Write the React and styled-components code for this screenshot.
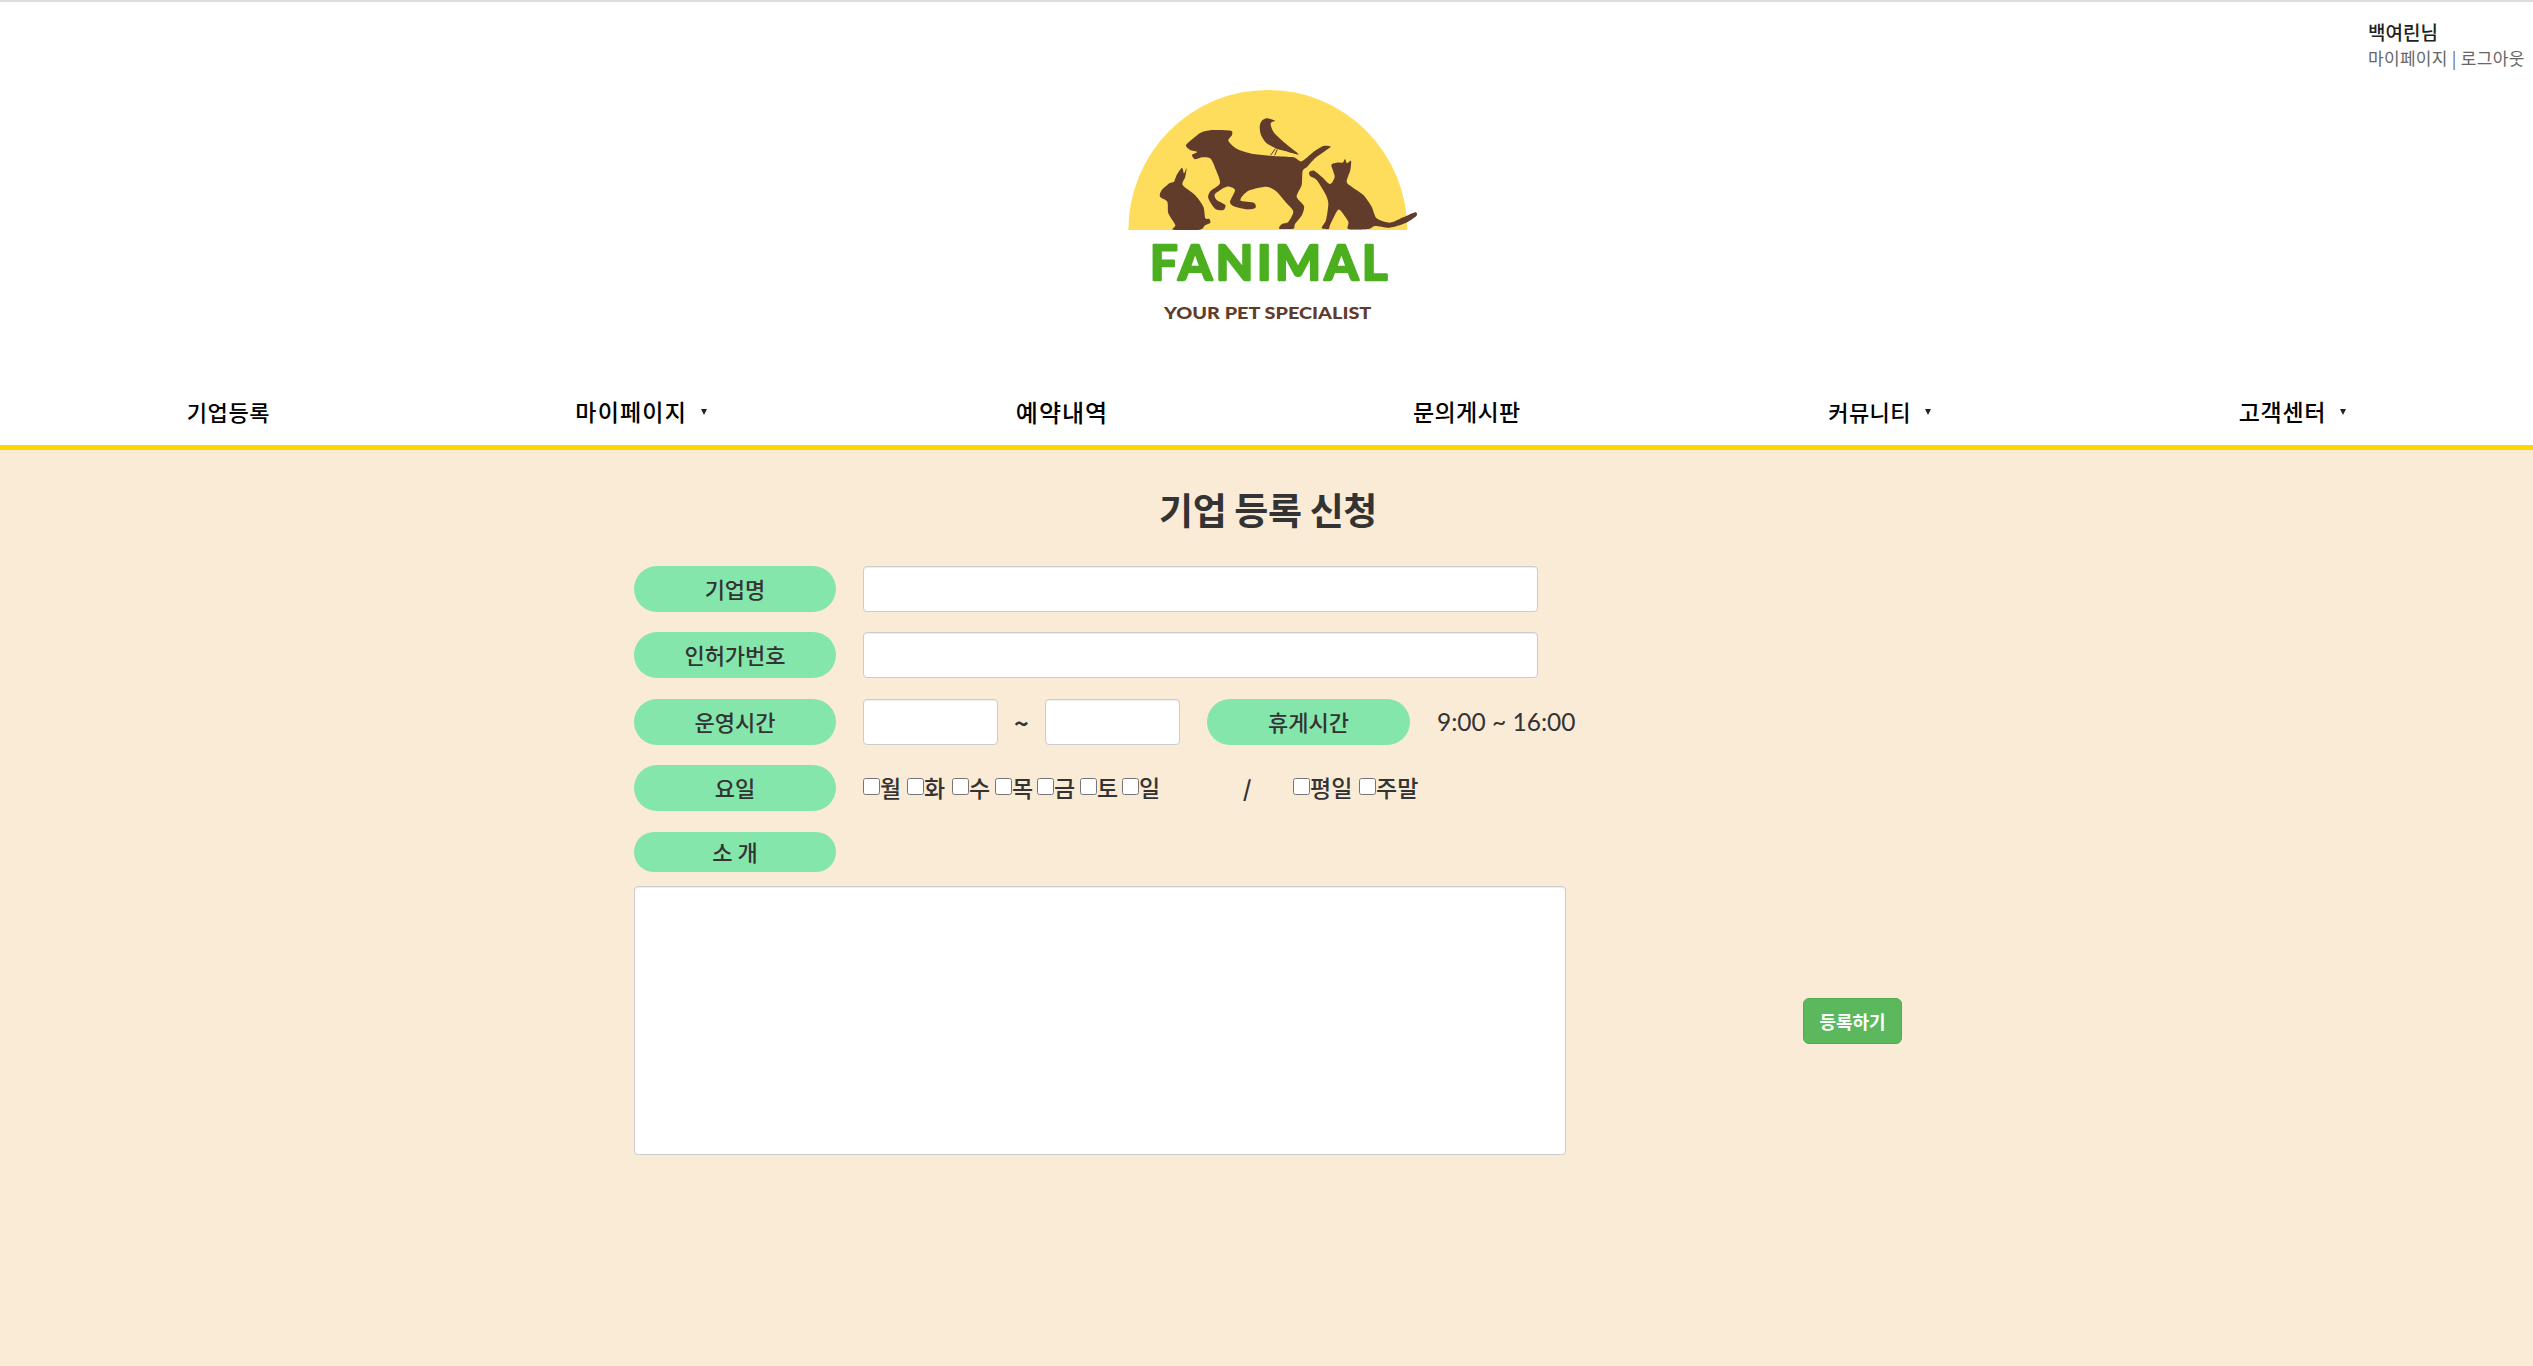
import React from "react";
import styled, { createGlobalStyle } from "styled-components";

const GlobalStyle = createGlobalStyle`
  html, body { margin: 0; padding: 0; background: #fff; }
  body { font-family: "Noto Sans CJK KR", "Noto Sans", sans-serif; color: #333; }
  * { box-sizing: border-box; }
`;

const Page = styled.div`
  display: flex;
  flex-direction: column;
  min-height: 1366px;
  border-top: 2px solid #ddd;
`;

const Header = styled.header`
  position: relative;
  display: flex;
  justify-content: center;
  height: 378px;
  padding: 68px 0 0 7px;
  background: #fff;
`;

const UserBox = styled.div`
  position: absolute;
  top: 16px;
  left: 2368px;
  white-space: nowrap;
`;

const UserName = styled.div`
  font-size: 19px;
  line-height: 27px;
  font-weight: 500;
  color: #222;
`;

const UserLinks = styled.div`
  font-size: 17px;
  line-height: 26px;
  color: #666;
  letter-spacing: 0.3px;
`;

const Nav = styled.nav`
  display: grid;
  grid-template-columns: repeat(6, 412.8px);
  height: 70px;
  padding: 0 0 0 22px;
  align-items: center;
  background: #fff;
  border-bottom: 5px solid #ffd700;
`;

const NavItem = styled.a`
  display: flex;
  align-items: center;
  justify-content: center;
  gap: 14px;
  padding-left: ${(p) => p.$shift || 0}px;
  font-size: ${(p) => p.$size}px;
  font-weight: 500;
  color: #000;
  margin-top: -3px;
  letter-spacing: ${(p) => p.$spacing || 0}px;
`;

const Caret = styled.span`
  width: 0;
  height: 0;
  margin-top: 2px;
  border-left: 3.5px solid transparent;
  border-right: 3.5px solid transparent;
  border-top: 6px solid #222;
`;

const Main = styled.main`
  flex: 1;
  background: #faebd7;
  padding: 0 0 0 634px;
`;

const Title = styled.h2`
  width: 2533px;
  margin: 0 0 0 -634px;
  height: 116px;
  padding: 31px 0 0 3px;
  font-size: 37px;
  line-height: 56px;
  font-weight: 700;
  letter-spacing: -0.4px;
  color: #333;
  text-align: center;
`;

const Row = styled.div`
  display: flex;
  align-items: center;
  height: ${(p) => p.$height || 46}px;
  margin-bottom: 20.4px;
`;

const Pill = styled.div`
  display: flex;
  align-items: center;
  justify-content: center;
  flex: none;
  width: ${(p) => p.$width || 202}px;
  height: 100%;
  margin-left: ${(p) => p.$before || 0}px;
  margin-right: 27px;
  padding-bottom: 2px;
  border-radius: 23px;
  background: #84e6ab;
  font-size: 22px;
  font-weight: 500;
  color: #333;
  white-space: pre;
`;

const TextInput = styled.input`
  width: ${(p) => p.$width}px;
  height: 46px;
  padding: 6px 12px;
  background: #fff;
  border: 1px solid #ccc;
  border-radius: 4px;
  box-shadow: inset 0 1px 1px rgba(0, 0, 0, 0.075);
`;

const Tilde = styled.span`
  width: 47px;
  text-align: center;
  font-size: 25px;
  font-weight: 700;
`;

const TimeText = styled.span`
  font-family: "Lato", sans-serif;
  font-size: 24.5px;
  color: #333;
  white-space: nowrap;
`;

const Check = styled.label`
  display: flex;
  align-items: center;
  width: ${(p) => p.$width}px;
  padding-bottom: 2px;
  font-size: 23px;
  font-weight: 500;
  line-height: 30px;
  color: #333;
  white-space: nowrap;

  input {
    width: 17px;
    height: 17px;
    margin: -1px 0 0 0;
  }
`;

const Slash = styled.span`
  width: 50px;
  margin-left: 78px;
  padding-bottom: 2px;
  font-size: 22px;
  font-weight: 700;
`;

const IntroRow = styled.div`
  display: flex;
  align-items: center;
  gap: 237px;
  margin-top: -6px;
`;

const IntroArea = styled.textarea`
  width: 932px;
  height: 269px;
  padding: 6px 12px;
  background: #fff;
  border: 1px solid #ccc;
  border-radius: 4px;
  box-shadow: inset 0 1px 1px rgba(0, 0, 0, 0.075);
  resize: none;
`;

const SubmitButton = styled.button`
  width: 99px;
  height: 46px;
  margin-top: 2px;
  padding: 0;
  border: 1px solid #4cae4c;
  border-radius: 6px;
  background: #5cb85c;
  font-family: inherit;
  font-size: 18px;
  font-weight: 700;
  color: #fff;
`;

// catmull-rom through the traced points, so thin legs and ears survive
const smooth = (pts) => {
  const n = pts.length;
  const at = (i) => pts[(i + n) % n];
  let d = `M${pts[0][0]} ${pts[0][1]}`;
  for (let i = 0; i < n; i++) {
    const [p0, p1, p2, p3] = [at(i - 1), at(i), at(i + 1), at(i + 2)];
    const c1 = [p1[0] + (p2[0] - p0[0]) / 8, p1[1] + (p2[1] - p0[1]) / 8];
    const c2 = [p2[0] - (p3[0] - p1[0]) / 8, p2[1] - (p3[1] - p1[1]) / 8];
    d += ` C${c1[0]} ${c1[1]} ${c2[0]} ${c2[1]} ${p2[0]} ${p2[1]}`;
  }
  return d + " Z";
};

const dog = [[318,226],[340,205],[362,188],[395,180],[452,182],[456,195],[445,212],[470,236],[520,252],[580,258],[640,262],[665,274],[700,246],[730,228],[752,230],[735,243],[705,265],[682,290],[668,302],[665,345],[650,380],[672,408],[666,435],[645,462],[640,476],[598,476],[606,462],[625,456],[640,425],[620,400],[590,365],[560,350],[510,360],[490,375],[482,392],[522,398],[526,414],[500,418],[460,408],[450,395],[465,360],[440,350],[405,372],[410,390],[436,405],[430,420],[405,416],[385,385],[390,365],[420,340],[408,300],[392,266],[368,262],[345,268],[336,255],[352,246],[330,240]];
const bird = [[560,145],[580,150],[585,153],[572,160],[580,185],[610,215],[656,253],[615,243],[592,237],[560,220],[543,195],[539,170],[545,153]];
const rabbit = [[306,293],[312,310],[320,293],[316,320],[308,345],[345,375],[370,410],[376,445],[388,447],[391,458],[375,466],[360,479],[280,479],[286,465],[265,430],[262,395],[240,380],[244,362],[268,340],[282,335],[290,315]];
const cat = [[688,306],[702,302],[725,320],[750,342],[764,320],[754,285],[770,278],[788,278],[795,267],[801,280],[813,272],[811,300],[800,335],[815,350],[850,375],[875,410],[890,445],[930,458],[970,442],[1006,427],[1009,438],[975,460],[930,473],[885,468],[865,477],[805,477],[805,455],[780,420],[770,425],[750,465],[746,477],[725,474],[738,450],[745,400],[735,370],[710,330],[690,318]];

const BROWN = "#613c2b";
const GREEN = "#4caf1f";

const Logo = () => (
  <svg width="380" height="270" viewBox="0 0 1140 810" aria-label="FANIMAL">
    <path d="M145 480 A418 420 0 0 1 982 480 Z" fill="#ffdd5c" />
    {[dog, bird, rabbit, cat].map((pts, i) => (
      <path key={i} d={smooth(pts)} fill={BROWN} />
    ))}
    <path d="M586 236 L572 256 M592 238 L584 256" stroke={BROWN} strokeWidth="3" />
    <text
      x="210"
      y="630"
      fontFamily="Lato, sans-serif"
      fontWeight="700"
      fontSize="146"
      textLength="712"
      lengthAdjust="spacing"
      fill={GREEN}
      stroke={GREEN}
      strokeWidth="8"
      strokeLinejoin="round"
    >
      FANIMAL
    </text>
    <text
      x="252"
      y="746"
      fontFamily="Lato, sans-serif"
      fontWeight="900"
      fontSize="52"
      textLength="622"
      lengthAdjust="spacingAndGlyphs"
      fill={BROWN}
    >
      YOUR PET SPECIALIST
    </text>
  </svg>
);

const navItems = [
  { label: "기업등록", size: 22, spacing: 0.6 },
  { label: "마이페이지", size: 23, spacing: 1.2, caret: true },
  { label: "예약내역", size: 24, spacing: 1, shift: 16 },
  { label: "문의게시판", size: 23, spacing: 0.4 },
  { label: "커뮤니티", size: 22, spacing: 0.4, caret: true },
  { label: "고객센터", size: 23, spacing: 0.6, caret: true },
];

const days = [
  ["월", 44],
  ["화", 45],
  ["수", 43],
  ["목", 42],
  ["금", 43],
  ["토", 42],
  ["일", 43],
];

export default function App() {
  return (
    <Page>
      <GlobalStyle />
      <Header>
        <Logo />
        <UserBox>
          <UserName>백여린님</UserName>
          <UserLinks>마이페이지 | 로그아웃</UserLinks>
        </UserBox>
      </Header>
      <Nav>
        {navItems.map((item) => (
          <NavItem key={item.label} $size={item.size} $spacing={item.spacing} $shift={item.shift}>
            {item.label}
            {item.caret && <Caret />}
          </NavItem>
        ))}
      </Nav>
      <Main>
        <Title>기업 등록 신청</Title>
        <Row>
          <Pill>기업명</Pill>
          <TextInput $width={675} />
        </Row>
        <Row>
          <Pill>인허가번호</Pill>
          <TextInput $width={675} />
        </Row>
        <Row>
          <Pill>운영시간</Pill>
          <TextInput $width={135} />
          <Tilde>~</Tilde>
          <TextInput $width={135} />
          <Pill $width={203} $before={27}>휴게시간</Pill>
          <TimeText>9:00 ~ 16:00</TimeText>
        </Row>
        <Row>
          <Pill>요일</Pill>
          {days.map(([d, w]) => (
            <Check key={d} $width={w}>
              <input type="checkbox" />
              {d}
            </Check>
          ))}
          <Slash>/</Slash>
          <Check $width={66}>
            <input type="checkbox" />
            평일
          </Check>
          <Check $width={66}>
            <input type="checkbox" />
            주말
          </Check>
        </Row>
        <Row $height={40}>
          <Pill>{"소 개"}</Pill>
        </Row>
        <IntroRow>
          <IntroArea />
          <SubmitButton>등록하기</SubmitButton>
        </IntroRow>
      </Main>
    </Page>
  );
}
